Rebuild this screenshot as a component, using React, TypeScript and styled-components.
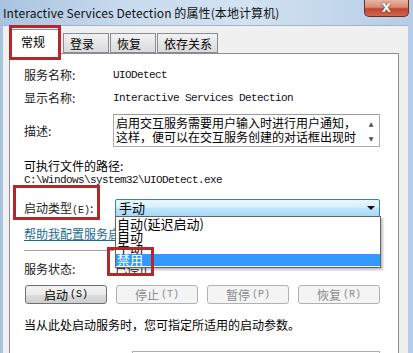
import * as React from 'react'
import styled, { createGlobalStyle } from 'styled-components'

const cjk = `"Noto Sans CJK SC", "Noto Sans", sans-serif`
const mono = `"Liberation Mono", "DejaVu Sans Mono", monospace`

const GlobalStyle = createGlobalStyle`
  html, body {
    margin: 0;
    padding: 0;
    background: #b9cee5;
  }
  * {
    box-sizing: border-box;
  }
`

const Window = styled.div`
  width: 413px;
  height: 353px;
  overflow: hidden;
  display: flex;
  flex-direction: column;
  padding: 0 5px 0 3px;
  background: linear-gradient(90deg, #a9c3df 0%, #c8daee 30%, #d3e2f2 60%, #b5cce6 100%);
  font-family: ${cjk};
  color: #000;
`

const TitleBar = styled.div`
  height: 25px;
  flex-shrink: 0;
  display: flex;
  justify-content: space-between;
  align-items: flex-start;
`

const Title = styled.div`
  font-size: 12px;
  line-height: 12px;
  padding-top: 7px;
  color: #111;
  white-space: nowrap;
  letter-spacing: 0.1px;
`

const CloseButton = styled.div`
  width: 45px;
  height: 17px;
  margin-right: -1px;
  border: 1px solid #6e2c22;
  border-top: none;
  border-radius: 0 0 5px 5px;
  background: linear-gradient(180deg, #eab5a6 0%, #d88a74 45%, #c1462f 55%, #d2664c 100%);
  display: flex;
  align-items: center;
  justify-content: center;
  color: #fff;
  font-family: "DejaVu Sans", sans-serif;
  font-weight: bold;
  font-size: 12px;
  text-shadow: 0 0 2px #5a1a10;
`

const Body = styled.div`
  flex: 1;
  background: #f0f0f0;
  padding: 3px 9px 0 6px;
  display: flex;
  flex-direction: column;
  border-top: 1px solid #9fb5cf;
`

const TabRow = styled.div`
  display: flex;
  align-items: flex-end;
  height: 24px;
  padding-left: 2px;
  gap: 1px;
  position: relative;
  z-index: 2;
`

const Tab = styled.div<{ active?: boolean }>`
  position: relative;
  height: ${(p) => (p.active ? '25px' : '20px')};
  margin-bottom: ${(p) => (p.active ? '-1px' : '0')};
  margin-right: ${(p) => (p.active ? '2px' : '0')};
  min-width: ${(p) => (p.active ? '49px' : '46px')};
  padding: ${(p) => (p.active ? '4px 9px 0' : '2px 5px 0 6px')};
  border: 1px solid #898c95;
  border-bottom: ${(p) => (p.active ? 'none' : '1px solid #898c95')};
  background: ${(p) => (p.active ? '#fff' : 'linear-gradient(180deg, #f2f2f2 0%, #e6e6e6 50%, #dadada 100%)')};
  font-size: 12px;
  line-height: 16px;
  white-space: nowrap;
`

const Highlight = styled.div`
  position: absolute;
  border: 3px solid #b3282d;
  pointer-events: none;
  z-index: 5;
`

const Panel = styled.div`
  flex: 1;
  background: #fff;
  border: 1px solid #898c95;
  border-bottom: none;
  padding: 14px 18px 0 14px;
  display: flex;
  flex-direction: column;
  font-size: 12px;
`

const Row = styled.div<{ gap: number; height: number }>`
  position: relative;
  display: grid;
  grid-template-columns: 89px 1fr;
  align-items: center;
  margin-top: ${(p) => p.gap}px;
  height: ${(p) => p.height}px;
`

const Label = styled.div`
  font-size: 12px;
  line-height: 14px;
  white-space: nowrap;
  color: #1a1a1a;
`

const Mono = styled.span`
  font-family: ${mono};
  font-size: 10px;
  letter-spacing: 0;
`

const Value = styled.div`
  font-family: ${mono};
  font-size: 11px;
  letter-spacing: -0.6px;
  line-height: 14px;
  white-space: nowrap;
  color: #111;
`

const TextBox = styled.div`
  height: 33px;
  border: 1px solid #abadb3;
  border-top-color: #9a9ca3;
  display: flex;
  overflow: hidden;
`

const TextLines = styled.div`
  flex: 1;
  padding: 1px 0 0 2px;
  font-size: 12px;
  line-height: 14px;
  white-space: nowrap;
  overflow: hidden;
`

const ScrollCol = styled.div`
  width: 16px;
  flex-shrink: 0;
  display: flex;
  flex-direction: column;
  justify-content: space-between;
  align-items: center;
  padding: 6px 0 4px;
  color: #4d4d4d;
  font-size: 6px;
  line-height: 6px;
  font-family: "DejaVu Sans", sans-serif;
`

const Block = styled.div<{ gap: number }>`
  margin-top: ${(p) => p.gap}px;
  font-size: 12px;
  line-height: 14px;
  white-space: nowrap;
`

const Combo = styled.div`
  position: relative;
  margin-left: 2px;
  height: 18px;
  border: 1px solid #3c7fb1;
  border-radius: 2px;
  background: linear-gradient(180deg, #eaf6fd 0%, #d9f0fc 45%, #bee6fd 50%, #a7d9f5 100%);
  display: flex;
  align-items: center;
  justify-content: space-between;
  padding: 0 4px 0 3px;
  font-size: 13px;
  line-height: 16px;
`

const Arrow = styled.div`
  width: 0;
  height: 0;
  border-left: 4px solid transparent;
  border-right: 4px solid transparent;
  border-top: 4px solid #111;
`

const DropList = styled.div`
  position: absolute;
  top: 100%;
  left: -1px;
  right: -2px;
  height: 52px;
  background: #fff;
  border: 1px solid #646464;
  box-shadow: 2px 2px 2px rgba(0, 0, 0, 0.25);
  padding-top: 1px;
  z-index: 4;
`

const Option = styled.div<{ selected?: boolean }>`
  position: relative;
  height: 12px;
  line-height: 12px;
  font-size: 13px;
  padding-left: 1px;
  white-space: nowrap;
  background: ${(p) => (p.selected ? '#3399ff' : 'transparent')};
  color: ${(p) => (p.selected ? '#fff' : '#000')};
`

const Link = styled.div`
  margin-top: 12px;
  font-size: 12px;
  line-height: 14px;
  color: #1b6a95;
  text-decoration: underline;
  white-space: nowrap;
`

const Separator = styled.div`
  margin-top: 9px;
  height: 1px;
  background: #a0a0a0;
  width: 90px;
`

const ButtonRow = styled.div`
  display: flex;
  justify-content: space-between;
  margin-top: 9px;
  padding-left: 1px;
`

const Button = styled.div<{ disabled?: boolean }>`
  width: 82px;
  height: 19px;
  border: 1px solid ${(p) => (p.disabled ? '#adb2b5' : '#707070')};
  border-radius: 3px;
  background: ${(p) =>
    p.disabled
      ? '#f4f4f4'
      : 'linear-gradient(180deg, #f2f2f2 0%, #ebebeb 50%, #dddddd 51%, #cfcfcf 100%)'};
  color: ${(p) => (p.disabled ? '#8a8a8a' : '#000')};
  display: flex;
  align-items: center;
  justify-content: center;
  font-size: 12px;
  line-height: 14px;
  gap: 2px;
`

const Input = styled.div`
  height: 20px;
  border: 1px solid #abadb3;
  margin-left: 19px;
`

const buttons = [
  { text: '启动', key: '(S)', disabled: false },
  { text: '停止', key: '(T)', disabled: true },
  { text: '暂停', key: '(P)', disabled: true },
  { text: '恢复', key: '(R)', disabled: true },
]

const options = ['自动(延迟启动)', '自动', '手动', '禁用']

export default function App() {
  return (
    <>
      <GlobalStyle />
      <Window>
        <TitleBar>
          <Title>Interactive Services Detection 的属性(本地计算机)</Title>
          <CloseButton>X</CloseButton>
        </TitleBar>
        <Body>
          <TabRow>
            <Tab active>
              常规
              <Highlight style={{ left: -3, top: -5, width: 52, height: 35 }} />
            </Tab>
            <Tab>登录</Tab>
            <Tab>恢复</Tab>
            <Tab>依存关系</Tab>
          </TabRow>
          <Panel>
            <Row gap={0} height={14}>
              <Label>服务名称:</Label>
              <Value>UIODetect</Value>
            </Row>
            <Row gap={9} height={14}>
              <Label>显示名称:</Label>
              <Value>Interactive Services Detection</Value>
            </Row>
            <Row gap={9} height={33}>
              <Label>描述:</Label>
              <TextBox>
                <TextLines>
                  启用交互服务需要用户输入时进行用户通知，
                  <br />
                  这样，便可以在交互服务创建的对话框出现时
                </TextLines>
                <ScrollCol>
                  <span>▲</span>
                  <span>▼</span>
                </ScrollCol>
              </TextBox>
            </Row>
            <Block gap={12}>可执行文件的路径:</Block>
            <Value>C:\Windows\system32\UIODetect.exe</Value>
            <Row gap={10} height={18}>
              <Label style={{ paddingTop: 4 }}>
                启动类型<Mono>(E)</Mono>:
              </Label>
              <Highlight style={{ left: -11, top: -12, width: 87, height: 35 }} />
              <Combo>
                手动
                <Arrow />
                <DropList>
                  {options.map((o, i) => (
                    <Option key={o} selected={i === options.length - 1}>
                      {o}
                    </Option>
                  ))}
                  <Highlight style={{ left: -9, top: 30, width: 47, height: 29 }} />
                </DropList>
              </Combo>
            </Row>
            <Link>帮助我配置服务启动选项。</Link>
            <Separator />
            <Row gap={11} height={14}>
              <Label>服务状态:</Label>
              <Label style={{ marginLeft: 2 }}>已停止</Label>
            </Row>
            <ButtonRow>
              {buttons.map((b) => (
                <Button key={b.text} disabled={b.disabled}>
                  {b.text}
                  <Mono>{b.key}</Mono>
                </Button>
              ))}
            </ButtonRow>
            <Block gap={14}>当从此处启动服务时，您可指定所适用的启动参数。</Block>
            <Row gap={19} height={20}>
              <Label style={{ alignSelf: 'end', marginBottom: -6 }}>
                启动参数<Mono>(M)</Mono>:
              </Label>
              <Input />
            </Row>
          </Panel>
        </Body>
      </Window>
    </>
  )
}
